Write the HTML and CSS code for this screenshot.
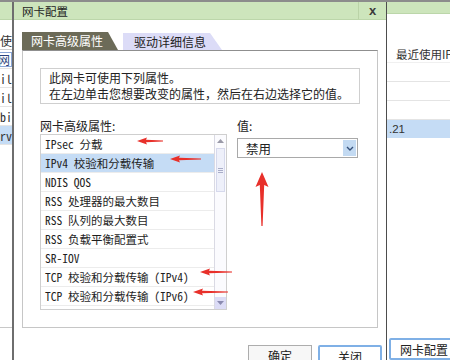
FILE: index.html
```html
<!DOCTYPE html>
<html lang="zh-CN">
<head>
<meta charset="utf-8">
<title>网卡配置</title>
<link rel="stylesheet" href="styles.css">
</head>
<body>
<div class="screen">
  <div class="bg-left">
    <div class="bar"></div>
    <div class="lrow lhead"><span>最近使</span></div>
    <div class="lrow"><span class="boxed">网</span></div>
    <div class="lrow mono"><span>il</span></div>
    <div class="lrow mono"><span>il</span></div>
    <div class="lrow mono"><span>bi</span></div>
    <div class="lrow mono hl"><span>rv</span></div>
    <div class="lline"></div>
  </div>

  <div class="dialog">
    <div class="titlebar">
      <span class="title">网卡配置</span>
      <span class="close">x</span>
    </div>
    <div class="dbody">
      <div class="tabs">
        <div class="tab active">网卡高级属性</div>
        <div class="tab second">驱动详细信息</div>
      </div>
      <div class="panel">
        <div class="info">
          <p>此网卡可使用下列属性。</p>
          <p>在左边单击您想要改变的属性，然后在右边选择它的值。</p>
        </div>
        <div class="cols">
          <div class="col-left">
            <div class="lbl">网卡高级属性:</div>
            <div class="listbox">
              <ul class="items">
                <li>IPsec 分载</li>
                <li class="sel">IPv4 校验和分载传输</li>
                <li>NDIS QOS</li>
                <li>RSS 处理器的最大数目</li>
                <li>RSS 队列的最大数目</li>
                <li>RSS 负载平衡配置式</li>
                <li>SR-IOV</li>
                <li>TCP 校验和分载传输 (IPv4)</li>
                <li>TCP 校验和分载传输 (IPv6)</li>
                <li>UDP 校验和分载传输 (IPv4)</li>
              </ul>
              <div class="scrollbar">
                <div class="sb-btn up"><svg width="7" height="4" viewBox="0 0 7 4"><polygon points="0,4 3.5,0 7,4" fill="#9a9aa8"/></svg></div>
                <div class="sb-thumb"><span></span><span></span><span></span></div>
                <div class="sb-track"></div>
                <div class="sb-btn down"><svg width="7" height="4" viewBox="0 0 7 4"><polygon points="0,0 3.5,4 7,0" fill="#8a8ab0"/></svg></div>
              </div>
            </div>
          </div>
          <div class="col-right">
            <div class="lbl">值:</div>
            <div class="select">
              <span>禁用</span>
              <span class="chev"><svg width="8" height="5" viewBox="0 0 8 5"><polyline points="1,1 4,4 7,1" fill="none" stroke="#35507a" stroke-width="1.4"/></svg></span>
            </div>
          </div>
        </div>
      </div>
      <div class="buttons">
        <button class="btn">确定</button>
        <button class="btn primary">关闭</button>
      </div>
    </div>
  </div>

  <div class="bg-right">
    <div class="bar"></div>
    <div class="rrow rhead"><span>最近使用IP地址</span></div>
    <div class="rrow"></div>
    <div class="rrow"></div>
    <div class="rrow"></div>
    <div class="rrow hl"><span class="ip">.21</span></div>
    <button class="btn primary bgbtn">网卡配置</button>
  </div>

  <svg class="arrows" width="450" height="360" viewBox="0 0 450 360">
    <g fill="#e8302a">
      <polygon points="137,141 147,137.5 146,139.8 163,140.6 163,141.4 146,142.2 147,144.5"/>
      <polygon points="170,159 180,155.5 179,157.8 201,158.6 201,159.4 179,160.2 180,162.5"/>
      <polygon points="262,172 268.5,187 264.2,185 262.6,226 261.4,226 259.8,185 255.5,187"/>
      <polygon points="200,272 210,268.5 209,270.8 232,271.6 232,272.4 209,273.2 210,275.5"/>
      <polygon points="193,292 203,288.5 202,290.8 228,291.6 228,292.4 202,293.2 203,295.5"/>
    </g>
  </svg>
</div>
</body>
</html>
```

FILE: styles.css
```css
* { box-sizing: border-box; margin: 0; padding: 0; }

body {
  margin: 0;
  width: 450px;
  height: 360px;
  overflow: hidden;
  background: #fff;
  font-family: "Noto Sans CJK SC", "Liberation Sans", sans-serif;
  font-size: 12px;
  color: #222;
}

.screen {
  position: relative;
  width: 450px;
  height: 360px;
  display: flex;
  border-top: 2px solid #8c8c8c;
  overflow: hidden;
}

.bar {
  height: 18px;
  background: #cde5bc;
  border-bottom: 1px solid #bcd6aa;
}

/* background app, left strip */
.bg-left {
  width: 12px;
  flex: none;
  overflow: hidden;
  display: flex;
  flex-direction: column;
}
.lrow {
  height: 19px;
  flex: none;
  display: flex;
  justify-content: flex-end;
  align-items: center;
  white-space: nowrap;
  border-bottom: 1px solid #e4e4e4;
  color: #333;
}
.lrow.mono { font-family: "Noto Sans Mono CJK SC", "Liberation Mono", monospace; font-size: 12px; }
.lhead { margin-top: 11px; border-bottom-color: #cfcfcf; }
.lrow .boxed { border: 1px solid #8aa6d6; padding: 0 1px; line-height: 13px; color: #2a3f7a; }
.lrow.hl { background: #c5dcf5; }
.lline { margin-top: 182px; border-top: 1px solid #c8c8c8; }

/* dialog */
.dialog {
  width: 375px;
  flex: none;
  border-left: 2px solid #6e6e6e;
  border-right: 1px solid #4d4d4d;
  display: flex;
  flex-direction: column;
  background: #fff;
}
.titlebar {
  height: 18px;
  flex: none;
  background: #cde5bc;
  border-bottom: 1px solid #bcd6aa;
  display: flex;
  align-items: center;
  padding-left: 8px;
}
.title { flex: 1; font-size: 11.5px; color: #1e1e1e; }
.close {
  width: 28px;
  height: 100%;
  border-left: 1px solid #bad3a7;
  display: flex;
  align-items: center;
  justify-content: center;
  font-family: "Liberation Sans", sans-serif;
  font-weight: bold;
  font-size: 13px;
  color: #3a3a3a;
}

.dbody { padding: 12px 8px 0 8px; }

.tabs { display: flex; height: 18px; gap: 5px; }
.tab { height: 18px; line-height: 18px; font-size: 12px; white-space: nowrap; }
.tab.active {
  width: 96px;
  background: #6c6b58;
  color: #fff;
  padding-left: 9px;
  clip-path: polygon(0 0, 86px 0, 100% 100%, 0 100%);
}
.tab.second {
  width: 99px;
  height: 17px;
  line-height: 17px;
  margin-top: 1px;
  background: #dcdcf7;
  color: #222;
  padding-left: 11px;
  clip-path: polygon(0 0, 87px 0, 100% 100%, 0 100%);
}

.panel {
  height: 278px;
  border: 1px solid #c6c6c6;
  border-top-color: #8f8f8f;
  padding: 17px 17px 0 17px;
}
.info {
  height: 36px;
  border: 1px solid #cfcfcf;
  padding: 1px 8px;
  line-height: 16px;
  font-size: 12px;
  color: #222;
}

.cols { display: flex; gap: 10px; margin-top: 14px; }
.col-left { width: 187px; }
.col-right { width: 121px; }
.lbl { height: 16px; line-height: 16px; font-size: 12px; }

.listbox {
  height: 176px;
  border: 1px solid #cfcfcf;
  display: flex;
  overflow: hidden;
}
.items { flex: 1; list-style: none; overflow: hidden; }
.items li {
  height: 19px;
  line-height: 19px;
  padding-left: 4px;
  border-bottom: 1px solid #ececec;
  font-family: "Noto Sans Mono CJK SC", "Liberation Mono", "Noto Sans CJK SC", monospace;
  font-size: 11.5px;
  white-space: nowrap;
  color: #1e1e1e;
}
.items li.sel { background: #c5dcf5; }

.scrollbar {
  width: 12px;
  flex: none;
  border-left: 1px solid #dadae4;
  background: #fbfbfe;
  display: flex;
  flex-direction: column;
}
.sb-btn {
  height: 12px;
  flex: none;
  display: flex;
  align-items: center;
  justify-content: center;
}
.sb-btn.down { background: #dcdcf6; }
.sb-thumb {
  height: 44px;
  margin: 1px 1px 0 1px;
  background: #eef0fa;
  border: 1px solid #d6d9ec;
  display: flex;
  flex-direction: column;
  justify-content: center;
  align-items: center;
  gap: 1px;
}
.sb-thumb span { width: 5px; height: 1px; background: #a9adc8; }
.sb-track { flex: 1; }

.select {
  margin-top: 4px;
  height: 20px;
  border: 1px solid #a9a9a9;
  display: flex;
  align-items: center;
  justify-content: space-between;
  padding: 0 1px 0 8px;
  font-size: 12.5px;
}
.chev {
  width: 13px;
  height: 16px;
  background: #c3daf2;
  display: flex;
  align-items: center;
  justify-content: center;
}

.buttons {
  display: flex;
  justify-content: flex-end;
  gap: 6px;
  margin-top: 17px;
  margin-right: -4px;
}
.btn {
  width: 64px;
  height: 22px;
  border: 1px solid #adadad;
  background: #f7f7f7;
  font-family: "Noto Sans CJK SC", sans-serif;
  font-size: 12px;
  color: #222;
  line-height: 20px;
}
.btn.primary {
  border: 2px solid #7fb0e6;
  border-radius: 2px;
  background: #fff;
}

/* background app, right strip */
.bg-right {
  flex: 1;
  overflow: hidden;
  display: flex;
  flex-direction: column;
}
.rrow {
  height: 19px;
  flex: none;
  border-bottom: 1px solid #e4e4e4;
  display: flex;
  align-items: center;
  white-space: nowrap;
  font-size: 11.5px;
  color: #333;
}
.rhead { margin-top: 31px; height: 18px; padding-left: 9px; border-bottom-color: #f0f0f0; }
.rrow.hl { background: #c5dcf5; height: 18px; border-bottom: none; }
.ip { font-family: "Liberation Sans", sans-serif; padding-left: 2px; }
.bgbtn { margin-top: 200px; margin-left: 2px; width: 70px; flex: none; }

/* annotation overlay */
.arrows { position: absolute; top: -2px; left: 0; pointer-events: none; }
```
